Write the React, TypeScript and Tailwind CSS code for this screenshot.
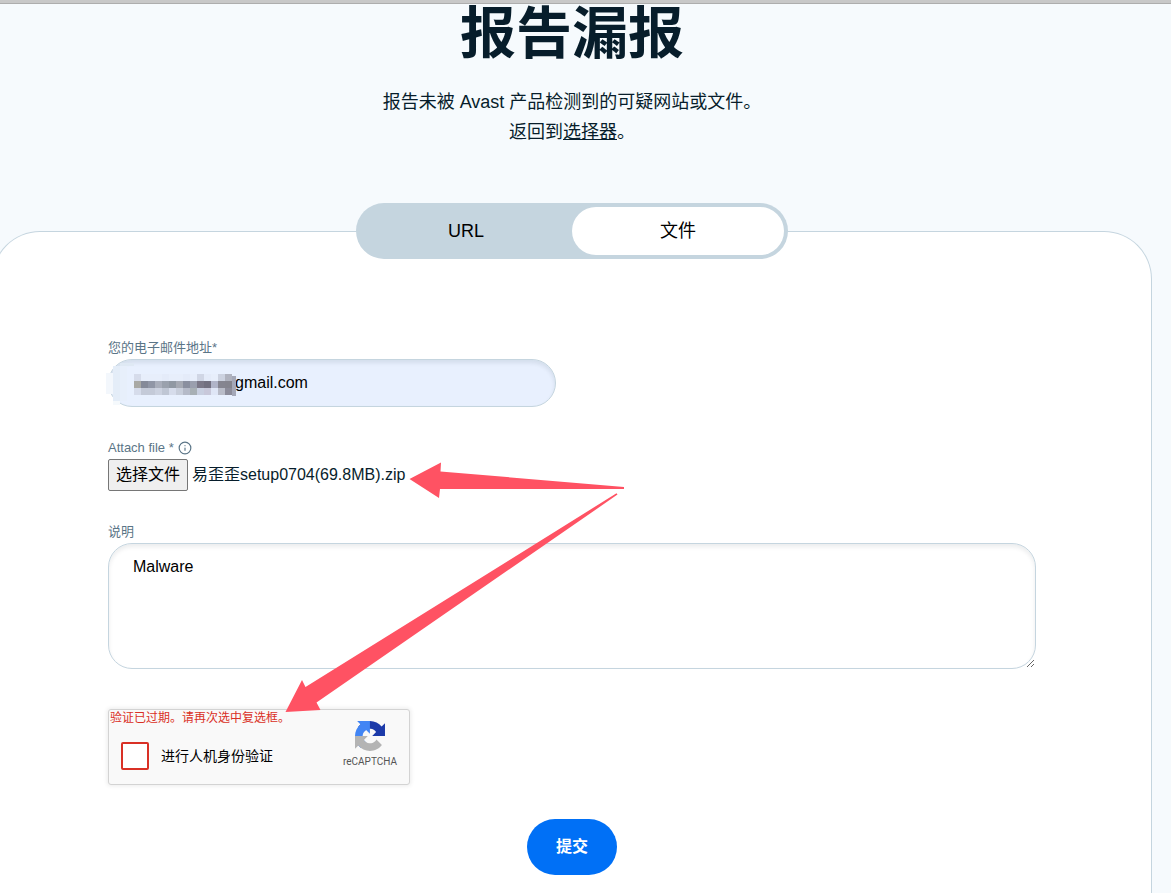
import { useRef, useState } from "react";
import { Info } from "lucide-react";

type TabKey = "url" | "file";

const TABS: { key: TabKey; label: string }[] = [
  { key: "url", label: "URL" },
  { key: "file", label: "文件" },
];

// 7px cells covering the first half of the address
const MASK_TOP = [
  "#d6dceb", "#e7eefb", "#e7eefb", "#e7eefb", "#e4ebf9", "#e7eefb", "#e7eefb",
  "#e4ebf9", "#e7eefb", "#d0d6e5", "#e4ebf9", "#e7eefb", "#ccd2e0", "#b0b3bf",
];
const MASK_MIDDLE = [
  "#a9a9a5", "#858a99", "#9096a6", "#a9aebb", "#9aa1ad", "#9098a3", "#a5a9b3",
  "#8a8f9f", "#9a9fae", "#7b7888", "#727080", "#b0b4c8", "#858590", "#84848e",
];
const MASK_BOTTOM = [
  "#d6dceb", "#c4cad8", "#c4cad8", "#ccd2e0", "#bfc6d4", "#d6dceb", "#c8cedb",
  "#b5bac8", "#a8b0b5", "#c8cfe0", "#c8c8da", "#dfe6f6", "#b9bcc8", "#8c8c9a",
];

function EmailMask() {
  return (
    <svg
      className="pointer-events-none absolute -left-0.5 top-0"
      width="132"
      height="48"
      shapeRendering="crispEdges"
      aria-hidden="true"
    >
      <rect x="0" y="14" width="7" height="21" fill="#f3f7fc" />
      <rect x="7" y="7" width="7" height="35" fill="#e4edf8" />
      <rect x="14" y="7" width="7" height="35" fill="#e7effb" />
      <rect x="7" y="42" width="7" height="4" fill="#f5f9fc" />
      <rect x="14" y="4" width="14" height="3" fill="#dfe9f4" />
      {[MASK_TOP, MASK_MIDDLE, MASK_BOTTOM].map((row, y) =>
        row.map((fill, x) => (
          <rect key={`${y}-${x}`} x={28 + x * 7} y={15 + y * 7} width="7" height="7" fill={fill} />
        ))
      )}
      <rect x="126" y="17" width="4" height="20" fill="#a4a8b8" />
    </svg>
  );
}

function RecaptchaLogo() {
  return (
    <svg width="30" height="30" viewBox="0 0 64 64" aria-hidden="true">
      <path
        fill="#1c3aa9"
        d="M64 31.955l-.033-1.37V4.687l-7.16 7.16C50.948 4.674 42.033.093 32.05.093c-10.4 0-19.622 4.96-25.458 12.64l11.736 11.86a15.55 15.55 0 0 1 4.754-5.334c2.05-1.6 4.952-2.906 8.968-2.906.485 0 .86.057 1.135.163 4.976.393 9.288 3.14 11.828 7.124l-8.307 8.307L64 31.953"
      />
      <path
        fill="#4285f4"
        d="M31.862.094l-1.37.033H4.594l7.16 7.16C4.58 13.147 0 22.06 0 32.046c0 10.4 4.96 19.622 12.64 25.458L24.5 45.768a15.55 15.55 0 0 1-5.334-4.754c-1.6-2.05-2.906-4.952-2.906-8.968 0-.485.057-.86.163-1.135.393-4.976 3.14-9.288 7.124-11.828l8.307 8.307L31.86.095"
      />
      <path
        fill="#b4b4b4"
        d="M.001 32.045l.033 1.37v25.898l7.16-7.16c5.86 7.173 14.774 11.754 24.76 11.754 10.4 0 19.622-4.96 25.458-12.64l-11.736-11.86a15.55 15.55 0 0 1-4.754 5.334c-2.05 1.6-4.952 2.906-8.968 2.906-.485 0-.86-.057-1.135-.163-4.976-.393-9.288-3.14-11.828-7.124l8.307-8.307c-10.522.04-22.4.066-27.295-.005"
      />
    </svg>
  );
}

function Arrows() {
  return (
    <svg
      className="pointer-events-none absolute left-0 top-0"
      width="520"
      height="380"
      fill="#ff5263"
      aria-hidden="true"
    >
      <path d="M301.5 142 333 125.500 332.500 134.500 516 150V152H332L331 161Z" />
      <path d="M177.500 375 194 343 197.500 350 508.500 156.300 509.500 157.600 208.500 365.500 212.500 373Z" />
    </svg>
  );
}

export default function App() {
  const [tab, setTab] = useState<TabKey>("file");
  const [email, setEmail] = useState("gmail.com");
  const [fileName, setFileName] = useState("易歪歪setup0704(69.8MB).zip");
  const [description, setDescription] = useState("Malware");
  const fileRef = useRef<HTMLInputElement>(null);

  return (
    <div className="flex min-h-screen flex-col overflow-hidden bg-[#f6fafd] font-['Liberation_Sans','Noto_Sans_CJK_SC',sans-serif] text-[#071d2b]">
      <div className="h-1 border-b border-[#adadad] bg-[#c8c8c8]" />

      <div className="-ml-2 mr-[19px] flex grow flex-col">
        <header className="text-center">
          <h1 className="text-[56px] leading-[60px] font-bold">报告漏报</h1>
          <p className="mt-[23px] text-lg leading-[30px]">
            报告未被 Avast 产品检测到的可疑网站或文件。
            <br />
            返回到
            <a href="#" className="underline">
              选择器
            </a>
            。
          </p>
        </header>

        <div
          role="tablist"
          className="z-10 mx-auto mt-14 grid h-14 w-[432px] grid-cols-2 rounded-full bg-[#c5d5df] p-1"
        >
          {TABS.map(({ key, label }) => (
            <button
              key={key}
              type="button"
              role="tab"
              aria-selected={tab === key}
              onClick={() => setTab(key)}
              className={`rounded-full text-lg text-black ${tab === key ? "bg-white" : ""}`}
            >
              {label}
            </button>
          ))}
        </div>

        <main className="-mt-7 grow rounded-t-[48px] border border-b-0 border-[#c5d5df] bg-white px-[115px] pt-[105px] pb-4">
          <form className="relative" onSubmit={(e) => e.preventDefault()}>
            <label htmlFor="email" className="block text-[13px] leading-[22px] text-[#5b7587]">
              您的电子邮件地址*
            </label>
            <div className="relative w-[448px] max-w-full">
              <input
                id="email"
                type="text"
                value={email}
                onChange={(e) => setEmail(e.target.value)}
                className="block h-12 w-full rounded-full border border-[#c5d5df] bg-[#e8f0fe] pr-6 pl-[126px] text-base text-black shadow-[inset_0_3px_4px_rgba(7,29,43,0.09)] outline-none"
              />
              <EmailMask />
            </div>

            <label
              htmlFor="attachment"
              className="mt-[30px] flex items-center gap-1 text-[13px] leading-[22px] text-[#5b7587]"
            >
              Attach file *
              <Info size={14} strokeWidth={2} />
            </label>
            <div className="flex items-center gap-1 text-base">
              <input
                id="attachment"
                ref={fileRef}
                type="file"
                className="hidden"
                onChange={(e) => setFileName(e.target.files?.[0]?.name ?? "")}
              />
              <button
                type="button"
                onClick={() => fileRef.current?.click()}
                className="h-8 w-20 rounded-xs border border-[#767676] bg-[#efefef] text-black"
              >
                选择文件
              </button>
              <span>{fileName}</span>
            </div>

            <label
              htmlFor="description"
              className="mt-[30px] block text-[13px] leading-[22px] text-[#5b7587]"
            >
              说明
            </label>
            <textarea
              id="description"
              value={description}
              onChange={(e) => setDescription(e.target.value)}
              className="block h-[126px] w-full rounded-3xl border border-[#c5d5df] bg-white px-6 py-[11px] text-base text-black shadow-[inset_0_3px_4px_rgba(7,29,43,0.08)] outline-none"
            />

            <div className="mt-10 flex h-[76px] w-[302px] justify-between rounded-[3px] border border-[#d3d3d3] bg-[#f9f9f9] shadow-[0_0_4px_1px_rgba(0,0,0,0.08)]">
              <div>
                <p className="pl-px text-xs leading-4 text-[#d93025]">验证已过期。请再次选中复选框。</p>
                <label className="mt-4 flex items-center gap-3 pl-3 text-sm text-black">
                  <input
                    type="checkbox"
                    className="size-7 appearance-none rounded-xs border-2 border-[#d93025] bg-white"
                  />
                  进行人机身份验证
                </label>
              </div>
              <div className="flex flex-col items-center pt-[11px] pr-3">
                <RecaptchaLogo />
                <span className="mt-1 font-[Roboto,sans-serif] text-[10px] leading-[14px] text-[#555555]">
                  reCAPTCHA
                </span>
              </div>
            </div>

            <button
              type="submit"
              className="mx-auto mt-[34px] block h-14 w-[90px] rounded-full bg-[#0070f6] text-base font-bold text-white"
            >
              提交
            </button>

            <Arrows />
          </form>
        </main>
      </div>
    </div>
  );
}
